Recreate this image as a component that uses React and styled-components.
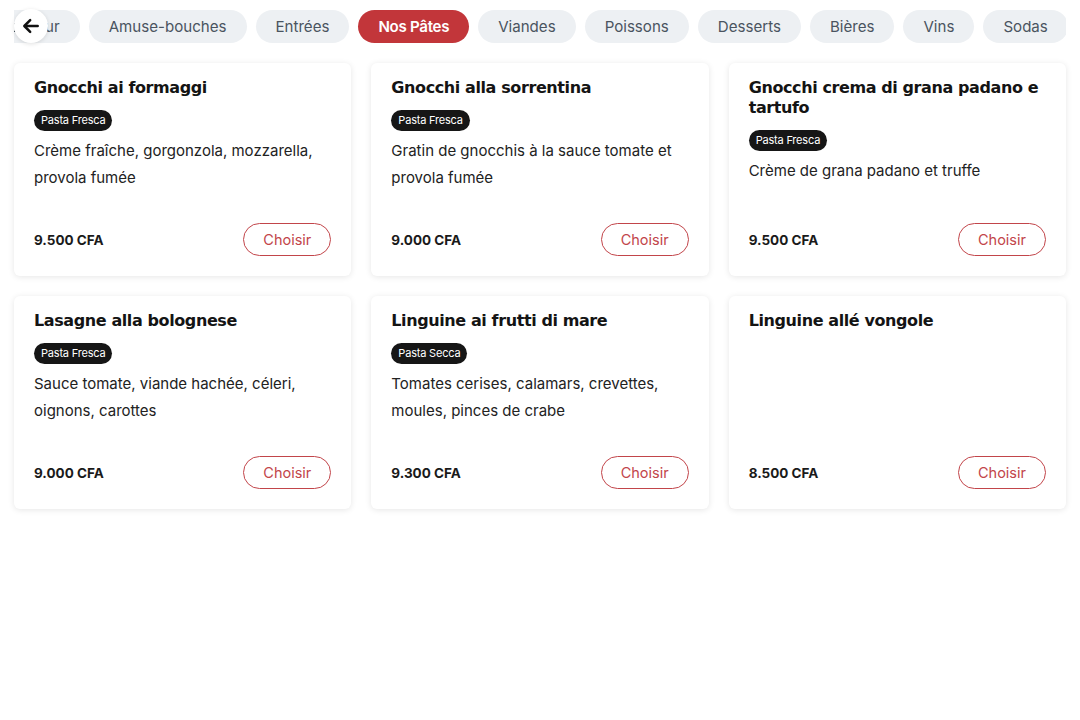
import React, { useLayoutEffect, useRef } from "react";
import styled, { createGlobalStyle } from "styled-components";

const GlobalStyle = createGlobalStyle`
    body {
        margin: 0;
        background: #ffffff;
        font-family: "Inter", "Liberation Sans", sans-serif;
        color: #1b1b1b;
    }
    * { box-sizing: border-box; }
`;

const Page = styled.div`
    width: 1080px;
    padding: 10px 14px;
`;

const NavWrap = styled.div`
    position: relative;
`;

const NavBar = styled.nav`
    display: flex;
    gap: 9px;
    overflow: hidden;
    white-space: nowrap;
`;

const BackButton = styled.button`
    position: absolute;
    left: 0;
    top: -1px;
    width: 34px;
    height: 34px;
    border-radius: 50%;
    border: none;
    background: #ffffff;
    box-shadow: 0 1px 4px rgba(0, 0, 0, 0.12);
    display: flex;
    align-items: center;
    justify-content: center;
    padding: 0;
    z-index: 2;
`;

const Pill = styled.button`
    flex: none;
    height: 33px;
    padding: 0 20px;
    border-radius: 17px;
    border: none;
    font-family: "Inter", sans-serif;
    font-size: 15.1px;
    background: ${(p) => (p.$active ? "#c2363a" : "#edf0f3")};
    color: ${(p) => (p.$active ? "#ffffff" : "#4a5460")};
    font-weight: ${(p) => (p.$active ? 600 : 400)};
    letter-spacing: ${(p) => (p.$active ? "-0.3px" : "0")};
`;

const Grid = styled.div`
    display: grid;
    grid-template-columns: repeat(3, 1fr);
    gap: 20px;
    margin-top: 20px;
`;

const Card = styled.div`
    height: 213px;
    background: #ffffff;
    border-radius: 6px;
    box-shadow: 0 1px 6px rgba(0, 0, 0, 0.1);
    padding: 15px 20px 20px;
    display: flex;
    flex-direction: column;
`;

const Title = styled.h3`
    margin: 0;
    font-family: "DejaVu Sans", sans-serif;
    font-weight: 700;
    font-size: 16px;
    line-height: 20px;
    color: #141414;
    letter-spacing: -0.4px;
`;

const Tag = styled.span`
    align-self: flex-start;
    margin-top: 12px;
    height: 21px;
    line-height: 21px;
    padding: 0 7px;
    border-radius: 11px;
    background: #161616;
    color: #ffffff;
    font-family: "Inter", sans-serif;
    font-size: 11px;
    letter-spacing: -0.2px;
`;

const Description = styled.p`
    margin: 6px 0 0;
    flex: 1;
    font-size: 15px;
    line-height: 27px;
    color: #222222;
`;

const Footer = styled.div`
    display: flex;
    align-items: center;
    justify-content: space-between;
`;

const Price = styled.span`
    font-size: 13.5px;
    font-weight: 700;
    color: #1a1a1a;
`;

const ChooseButton = styled.button`
    width: 88px;
    height: 33px;
    border-radius: 17px;
    border: 1.5px solid #c2454a;
    background: #ffffff;
    color: #c2454a;
    font-family: "Inter", sans-serif;
    font-size: 14.5px;
`;

const categories = [
    "Plat du jour",
    "Amuse-bouches",
    "Entrées",
    "Nos Pâtes",
    "Viandes",
    "Poissons",
    "Desserts",
    "Bières",
    "Vins",
    "Sodas",
];

const dishes = [
    {
        name: "Gnocchi ai formaggi",
        tag: "Pasta Fresca",
        desc: "Crème fraîche, gorgonzola, mozzarella, provola fumée",
        price: "9.500 CFA",
    },
    {
        name: "Gnocchi alla sorrentina",
        tag: "Pasta Fresca",
        desc: "Gratin de gnocchis à la sauce tomate et provola fumée",
        price: "9.000 CFA",
    },
    {
        name: "Gnocchi crema di grana padano e tartufo",
        tag: "Pasta Fresca",
        desc: "Crème de grana padano et truffe",
        price: "9.500 CFA",
    },
    {
        name: "Lasagne alla bolognese",
        tag: "Pasta Fresca",
        desc: "Sauce tomate, viande hachée, céleri, oignons, carottes",
        price: "9.000 CFA",
    },
    {
        name: "Linguine ai frutti di mare",
        tag: "Pasta Secca",
        desc: "Tomates cerises, calamars, crevettes, moules, pinces de crabe",
        price: "9.300 CFA",
    },
    {
        name: "Linguine allé vongole",
        price: "8.500 CFA",
    },
];

const App = () => {
    const navRef = useRef(null);
    const firstRef = useRef(null);

    // scroll the category bar so the first pill shows only its last 66px
    useLayoutEffect(() => {
        if (navRef.current && firstRef.current) {
            navRef.current.scrollLeft = firstRef.current.offsetWidth - 66;
        }
    }, []);

    return (
        <Page>
            <GlobalStyle />
            <NavWrap>
                <BackButton aria-label="Retour">
                    <svg width="20" height="20" viewBox="0 0 24 24" fill="none" stroke="#111" strokeWidth="3" strokeLinecap="round" strokeLinejoin="round">
                        <path d="M20 12H5" />
                        <path d="M11 5l-7 7 7 7" />
                    </svg>
                </BackButton>
                <NavBar ref={navRef}>
                    {categories.map((c, i) => (
                        <Pill key={c} ref={i === 0 ? firstRef : undefined} $active={c === "Nos Pâtes"}>
                            {c}
                        </Pill>
                    ))}
                </NavBar>
            </NavWrap>
            <Grid>
                {dishes.map((d) => (
                    <Card key={d.name}>
                        <Title>{d.name}</Title>
                        {d.tag && <Tag>{d.tag}</Tag>}
                        <Description>{d.desc}</Description>
                        <Footer>
                            <Price>{d.price}</Price>
                            <ChooseButton>Choisir</ChooseButton>
                        </Footer>
                    </Card>
                ))}
            </Grid>
        </Page>
    );
};

export default App;
